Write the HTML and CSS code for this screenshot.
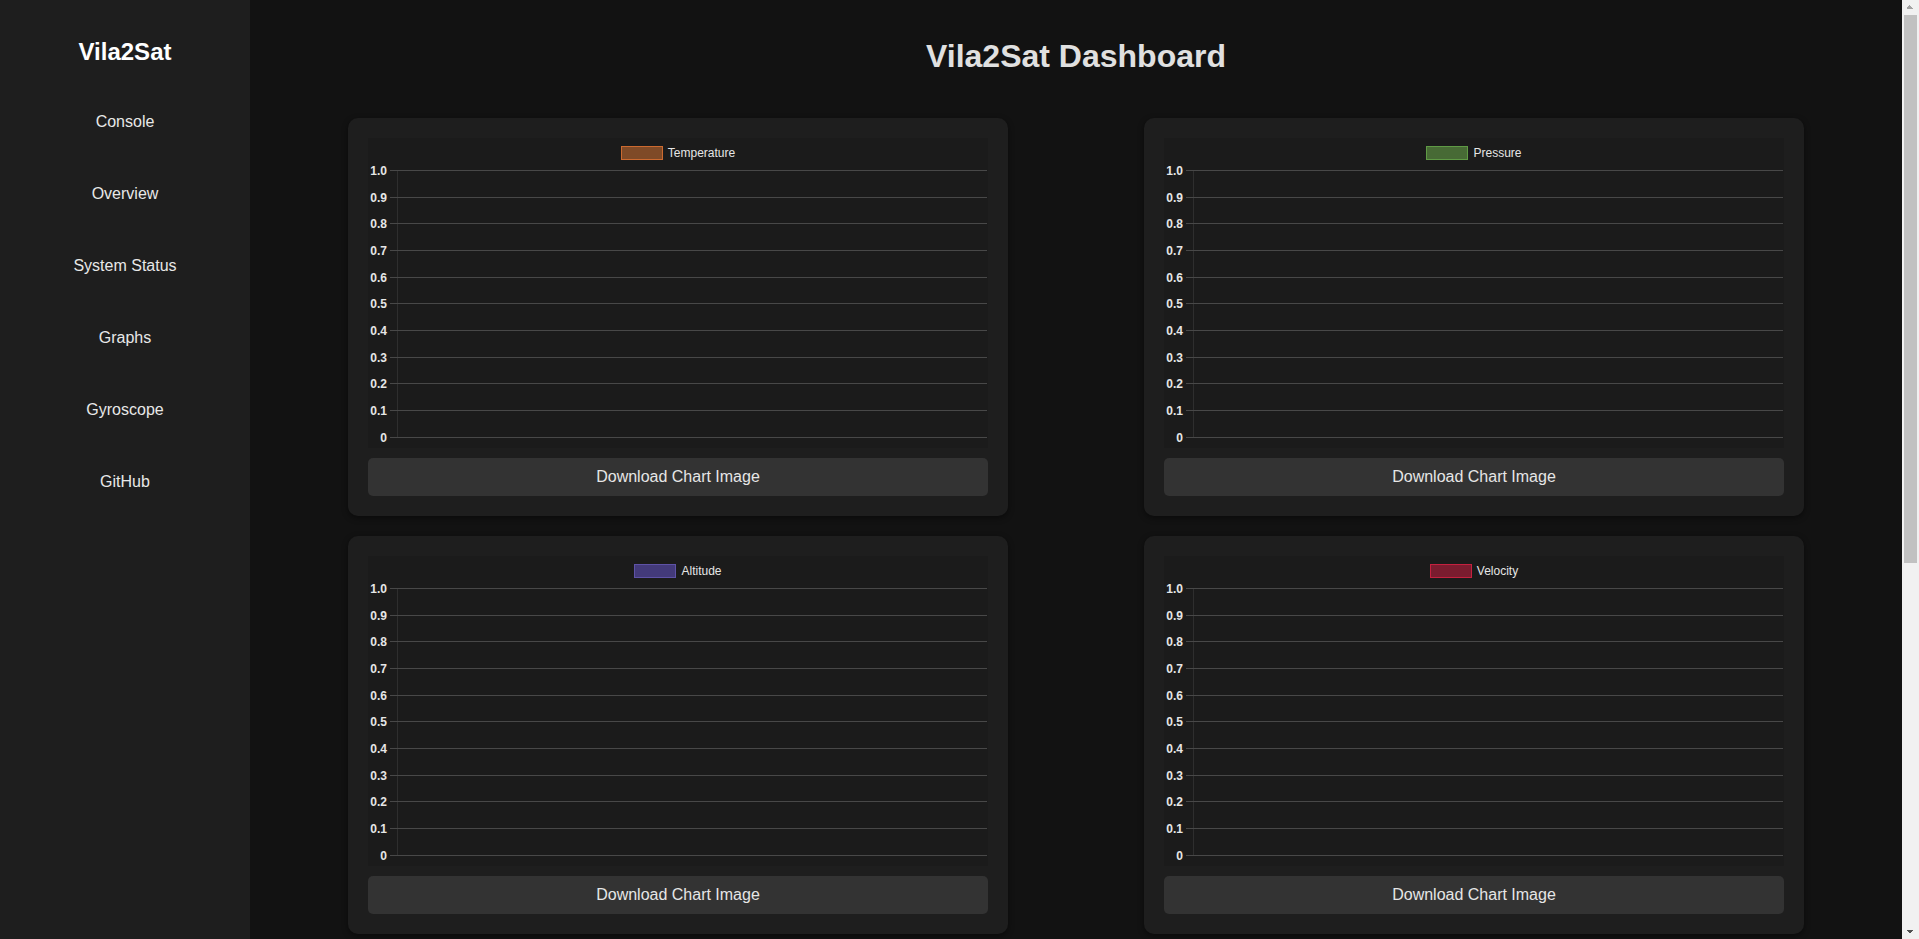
FILE: index.html
```html
<!DOCTYPE html>
<html lang="en">
<head>
<meta charset="utf-8">
<title>Vila2Sat Dashboard</title>
<link rel="stylesheet" href="styles.css">
</head>
<body>
<div class="layout">
  <aside class="sidebar">
    <h2 class="brand">Vila2Sat</h2>
    <nav class="nav">
      <a href="#" class="nav-link">Console</a>
      <a href="#" class="nav-link">Overview</a>
      <a href="#" class="nav-link">System Status</a>
      <a href="#" class="nav-link">Graphs</a>
      <a href="#" class="nav-link">Gyroscope</a>
      <a href="#" class="nav-link">GitHub</a>
    </nav>
  </aside>
  <main class="main">
    <h1 class="title">Vila2Sat Dashboard</h1>
    <div class="grid">
      <section class="card">
        <div class="chart">
          <div class="legend"><span class="swatch swatch-temp"></span><span class="legend-label">Temperature</span></div>
          <svg class="plot" width="620" height="287" viewBox="0 0 620 287">
            <g class="axis"><line x1="30.5" y1="9" x2="30.5" y2="277"/></g>
            <g class="gridlines">
              <line x1="23" y1="9.5" x2="620" y2="9.5"/><line x1="23" y1="36.5" x2="620" y2="36.5"/><line x1="23" y1="62.5" x2="620" y2="62.5"/><line x1="23" y1="89.5" x2="620" y2="89.5"/><line x1="23" y1="116.5" x2="620" y2="116.5"/><line x1="23" y1="142.5" x2="620" y2="142.5"/><line x1="23" y1="169.5" x2="620" y2="169.5"/><line x1="23" y1="196.5" x2="620" y2="196.5"/><line x1="23" y1="222.5" x2="620" y2="222.5"/><line x1="23" y1="249.5" x2="620" y2="249.5"/><line x1="23" y1="276.5" x2="620" y2="276.5"/>
            </g>
            <g class="ticks">
              <text x="20" y="14">1.0</text><text x="20" y="41">0.9</text><text x="20" y="67">0.8</text><text x="20" y="94">0.7</text><text x="20" y="121">0.6</text><text x="20" y="147">0.5</text><text x="20" y="174">0.4</text><text x="20" y="201">0.3</text><text x="20" y="227">0.2</text><text x="20" y="254">0.1</text><text x="20" y="281">0</text>
            </g>
          </svg>
        </div>
        <button class="download" type="button">Download Chart Image</button>
      </section>
      <section class="card">
        <div class="chart">
          <div class="legend"><span class="swatch swatch-press"></span><span class="legend-label">Pressure</span></div>
          <svg class="plot" width="620" height="287" viewBox="0 0 620 287">
            <g class="axis"><line x1="30.5" y1="9" x2="30.5" y2="277"/></g>
            <g class="gridlines">
              <line x1="23" y1="9.5" x2="620" y2="9.5"/><line x1="23" y1="36.5" x2="620" y2="36.5"/><line x1="23" y1="62.5" x2="620" y2="62.5"/><line x1="23" y1="89.5" x2="620" y2="89.5"/><line x1="23" y1="116.5" x2="620" y2="116.5"/><line x1="23" y1="142.5" x2="620" y2="142.5"/><line x1="23" y1="169.5" x2="620" y2="169.5"/><line x1="23" y1="196.5" x2="620" y2="196.5"/><line x1="23" y1="222.5" x2="620" y2="222.5"/><line x1="23" y1="249.5" x2="620" y2="249.5"/><line x1="23" y1="276.5" x2="620" y2="276.5"/>
            </g>
            <g class="ticks">
              <text x="20" y="14">1.0</text><text x="20" y="41">0.9</text><text x="20" y="67">0.8</text><text x="20" y="94">0.7</text><text x="20" y="121">0.6</text><text x="20" y="147">0.5</text><text x="20" y="174">0.4</text><text x="20" y="201">0.3</text><text x="20" y="227">0.2</text><text x="20" y="254">0.1</text><text x="20" y="281">0</text>
            </g>
          </svg>
        </div>
        <button class="download" type="button">Download Chart Image</button>
      </section>
      <section class="card">
        <div class="chart">
          <div class="legend"><span class="swatch swatch-alt"></span><span class="legend-label">Altitude</span></div>
          <svg class="plot" width="620" height="287" viewBox="0 0 620 287">
            <g class="axis"><line x1="30.5" y1="9" x2="30.5" y2="277"/></g>
            <g class="gridlines">
              <line x1="23" y1="9.5" x2="620" y2="9.5"/><line x1="23" y1="36.5" x2="620" y2="36.5"/><line x1="23" y1="62.5" x2="620" y2="62.5"/><line x1="23" y1="89.5" x2="620" y2="89.5"/><line x1="23" y1="116.5" x2="620" y2="116.5"/><line x1="23" y1="142.5" x2="620" y2="142.5"/><line x1="23" y1="169.5" x2="620" y2="169.5"/><line x1="23" y1="196.5" x2="620" y2="196.5"/><line x1="23" y1="222.5" x2="620" y2="222.5"/><line x1="23" y1="249.5" x2="620" y2="249.5"/><line x1="23" y1="276.5" x2="620" y2="276.5"/>
            </g>
            <g class="ticks">
              <text x="20" y="14">1.0</text><text x="20" y="41">0.9</text><text x="20" y="67">0.8</text><text x="20" y="94">0.7</text><text x="20" y="121">0.6</text><text x="20" y="147">0.5</text><text x="20" y="174">0.4</text><text x="20" y="201">0.3</text><text x="20" y="227">0.2</text><text x="20" y="254">0.1</text><text x="20" y="281">0</text>
            </g>
          </svg>
        </div>
        <button class="download" type="button">Download Chart Image</button>
      </section>
      <section class="card">
        <div class="chart">
          <div class="legend"><span class="swatch swatch-vel"></span><span class="legend-label">Velocity</span></div>
          <svg class="plot" width="620" height="287" viewBox="0 0 620 287">
            <g class="axis"><line x1="30.5" y1="9" x2="30.5" y2="277"/></g>
            <g class="gridlines">
              <line x1="23" y1="9.5" x2="620" y2="9.5"/><line x1="23" y1="36.5" x2="620" y2="36.5"/><line x1="23" y1="62.5" x2="620" y2="62.5"/><line x1="23" y1="89.5" x2="620" y2="89.5"/><line x1="23" y1="116.5" x2="620" y2="116.5"/><line x1="23" y1="142.5" x2="620" y2="142.5"/><line x1="23" y1="169.5" x2="620" y2="169.5"/><line x1="23" y1="196.5" x2="620" y2="196.5"/><line x1="23" y1="222.5" x2="620" y2="222.5"/><line x1="23" y1="249.5" x2="620" y2="249.5"/><line x1="23" y1="276.5" x2="620" y2="276.5"/>
            </g>
            <g class="ticks">
              <text x="20" y="14">1.0</text><text x="20" y="41">0.9</text><text x="20" y="67">0.8</text><text x="20" y="94">0.7</text><text x="20" y="121">0.6</text><text x="20" y="147">0.5</text><text x="20" y="174">0.4</text><text x="20" y="201">0.3</text><text x="20" y="227">0.2</text><text x="20" y="254">0.1</text><text x="20" y="281">0</text>
            </g>
          </svg>
        </div>
        <button class="download" type="button">Download Chart Image</button>
      </section>
    </div>
  </main>
  <div class="scrollbar" aria-hidden="true">
    <span class="scroll-btn scroll-up"></span>
    <span class="scroll-thumb"></span>
    <span class="scroll-track"></span>
    <span class="scroll-btn scroll-down"></span>
  </div>
</div>
</body>
</html>
```

FILE: styles.css
```css
html, body {
  margin: 0;
  padding: 0;
  height: 100%;
  overflow: hidden;
}

body {
  background: #121212;
  color: #e0e0e0;
  font-family: "Liberation Sans", Arial, sans-serif;
}

.layout {
  display: flex;
  height: 100vh;
}

.sidebar {
  flex: 0 0 250px;
  width: 250px;
  height: 100%;
  background: #1e1e1e;
  box-sizing: border-box;
  padding-top: 38px;
  text-align: center;
}

.brand {
  margin: 0;
  font-size: 24px;
  line-height: 28px;
  font-weight: bold;
  color: #ffffff;
}

.nav {
  display: flex;
  flex-direction: column;
  margin-top: 20px;
}

.nav-link {
  display: block;
  height: 72px;
  line-height: 72px;
  font-size: 16px;
  color: #e8e8e8;
  text-decoration: none;
}

.main {
  flex: 1;
  min-width: 0;
  height: 100%;
  box-sizing: border-box;
  overflow: hidden;
  padding-top: 38px;
}

.scrollbar {
  flex: 0 0 17px;
  width: 17px;
  height: 100%;
  background: #f1f1f1;
  display: flex;
  flex-direction: column;
}

.scroll-btn {
  display: block;
  height: 15px;
  flex: 0 0 15px;
  background-repeat: no-repeat;
  background-size: 4px 4px, 4px 4px;
}

.scroll-up {
  background-image:
    linear-gradient(to top left, #a3a3a3 50%, transparent 50%),
    linear-gradient(to top right, #a3a3a3 50%, transparent 50%);
  background-position: 4px 5px, 8px 5px;
}

.scroll-down {
  background-image:
    linear-gradient(to bottom left, #505050 50%, transparent 50%),
    linear-gradient(to bottom right, #505050 50%, transparent 50%);
  background-position: 4px 6px, 8px 6px;
}

.scroll-thumb {
  display: block;
  flex: 0 0 548px;
  margin: 0 2px;
  background: #c1c1c1;
}

.scroll-track {
  display: block;
  flex: 1;
}

.title {
  margin: 0;
  font-size: 32px;
  line-height: 37px;
  font-weight: bold;
  text-align: center;
  color: #e0e0e0;
}

.grid {
  display: grid;
  grid-template-columns: repeat(2, 660px);
  justify-content: center;
  column-gap: 136px;
  row-gap: 20px;
  margin-top: 43px;
}

.card {
  background: #1e1e1e;
  border-radius: 10px;
  padding: 20px;
  box-shadow: 0 2px 6px rgba(0, 0, 0, 0.45);
  display: flex;
  flex-direction: column;
  gap: 10px;
}

.chart {
  height: 310px;
  background: #1b1b1b;
  display: flex;
  flex-direction: column;
}

.legend {
  display: flex;
  justify-content: center;
  align-items: center;
  gap: 5px;
  padding-top: 8px;
  height: 14px;
}

.swatch {
  display: block;
  width: 40px;
  height: 12px;
  border: 1px solid;
}

.swatch-temp {
  background: #7f4a27;
  border-color: #cc6a30;
}

.swatch-press {
  background: #476a35;
  border-color: #5f9a45;
}

.swatch-alt {
  background: #433a7a;
  border-color: #5e52a6;
}

.swatch-vel {
  background: #7a1c2f;
  border-color: #c4213f;
}

.legend-label {
  font-size: 12px;
  line-height: 14px;
  color: #e6e6e6;
}

.plot {
  display: block;
  margin-top: 1px;
  margin-left: -1px;
}

.axis line {
  stroke: #2e2e2e;
  stroke-width: 1;
}

.gridlines line {
  stroke: #484848;
  stroke-width: 1;
}

.ticks text {
  font-family: "Liberation Sans", Arial, sans-serif;
  font-size: 12px;
  font-weight: bold;
  fill: #e6e6e6;
  text-anchor: end;
}

.download {
  display: block;
  width: 100%;
  height: 38px;
  border: none;
  border-radius: 5px;
  background: #333333;
  color: #e6e6e6;
  font-family: "Liberation Sans", Arial, sans-serif;
  font-size: 16px;
  cursor: pointer;
}
```
